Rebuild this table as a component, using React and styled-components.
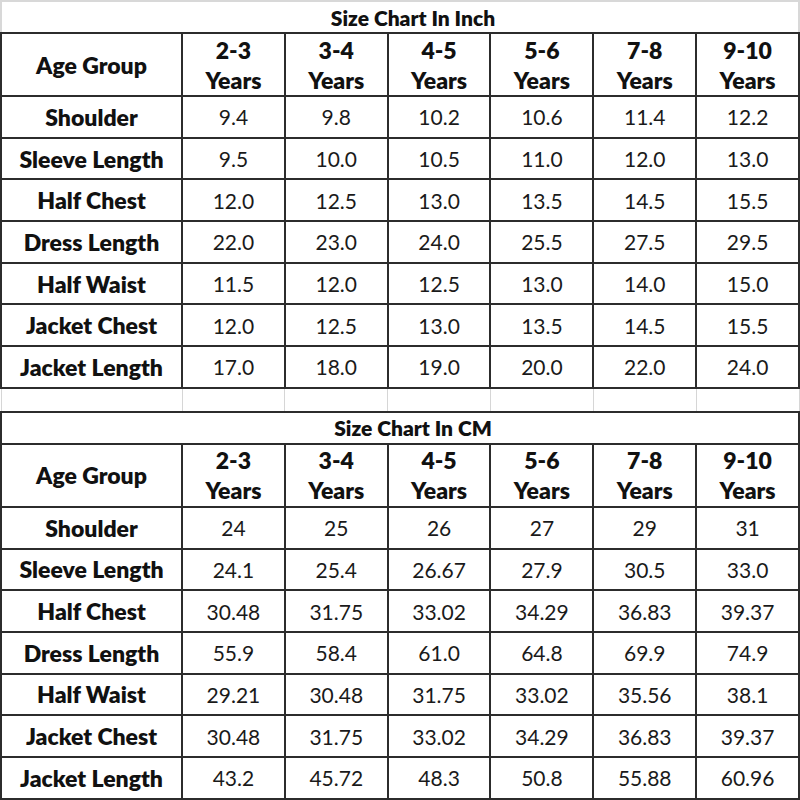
import React from 'react';
import styled, { createGlobalStyle } from 'styled-components';

const GlobalStyle = createGlobalStyle`
  html, body {
    margin: 0;
    padding: 0;
    background: #ffffff;
  }
  body {
    font-family: Lato, "Open Sans", "Liberation Sans", sans-serif;
    color: #111111;
  }
`;

const ages = ['2-3', '3-4', '4-5', '5-6', '7-8', '9-10'];

const inchRows = [
  ['Shoulder', '9.4', '9.8', '10.2', '10.6', '11.4', '12.2'],
  ['Sleeve Length', '9.5', '10.0', '10.5', '11.0', '12.0', '13.0'],
  ['Half Chest', '12.0', '12.5', '13.0', '13.5', '14.5', '15.5'],
  ['Dress Length', '22.0', '23.0', '24.0', '25.5', '27.5', '29.5'],
  ['Half Waist', '11.5', '12.0', '12.5', '13.0', '14.0', '15.0'],
  ['Jacket Chest', '12.0', '12.5', '13.0', '13.5', '14.5', '15.5'],
  ['Jacket Length', '17.0', '18.0', '19.0', '20.0', '22.0', '24.0'],
];

const cmRows = [
  ['Shoulder', '24', '25', '26', '27', '29', '31'],
  ['Sleeve Length', '24.1', '25.4', '26.67', '27.9', '30.5', '33.0'],
  ['Half Chest', '30.48', '31.75', '33.02', '34.29', '36.83', '39.37'],
  ['Dress Length', '55.9', '58.4', '61.0', '64.8', '69.9', '74.9'],
  ['Half Waist', '29.21', '30.48', '31.75', '33.02', '35.56', '38.1'],
  ['Jacket Chest', '30.48', '31.75', '33.02', '34.29', '36.83', '39.37'],
  ['Jacket Length', '43.2', '45.72', '48.3', '50.8', '55.88', '60.96'],
];

const Sheet = styled.table`
  width: 800px;
  border-collapse: collapse;
  table-layout: fixed;
`;

const TitleRow = styled.tr`
  height: 32px;
`;

// the merged title cell in the source sheet sits a little right of centre
const Title = styled.th`
  font-size: 21px;
  font-weight: 800;
  text-align: center;
  vertical-align: middle;
  padding: 0 0 0 26px;
  border: 2px solid ${p => (p.$soft ? '#d8d8d8' : '#2c2c2c')};
  border-bottom-color: #2c2c2c;
`;

const HeadRow = styled.tr`
  height: 63px;
`;

const HeadCell = styled.th`
  font-size: 23px;
  font-weight: 800;
  text-align: center;
  vertical-align: middle;
  line-height: 30px;
  padding: 0;
  border: 2px solid #2c2c2c;
`;

const Row = styled.tr`
  height: 41.7px;
`;

const Label = styled.td`
  font-size: 23px;
  font-weight: 800;
  text-align: center;
  vertical-align: middle;
  padding: 0;
  white-space: nowrap;
  border: 2px solid #2c2c2c;
`;

const Value = styled.td`
  font-size: 21px;
  font-weight: 400;
  text-align: center;
  vertical-align: middle;
  padding: 0;
  color: #1a1a1a;
  border: 2px solid #2c2c2c;
`;

const GapRow = styled.tr`
  height: 24px;
`;

const GapCell = styled.td`
  padding: 0;
  border: 1px solid #d6d6d6;
  border-top: 2px solid #2c2c2c;
  border-bottom: 2px solid #2c2c2c;
`;

function Chart({ title, rows, soft }) {
  return (
    <>
      <TitleRow>
        <Title colSpan={7} $soft={soft}>{title}</Title>
      </TitleRow>
      <HeadRow>
        <HeadCell>Age Group</HeadCell>
        {ages.map(a => (
          <HeadCell key={a}>
            {a}
            <br />
            Years
          </HeadCell>
        ))}
      </HeadRow>
      {rows.map(r => (
        <Row key={r[0]}>
          <Label>{r[0]}</Label>
          {r.slice(1).map((v, i) => (
            <Value key={i}>{v}</Value>
          ))}
        </Row>
      ))}
    </>
  );
}

export default function App() {
  return (
    <>
      <GlobalStyle />
      <Sheet>
        <colgroup>
          <col style={{ width: 181 }} />
          <col />
          <col />
          <col />
          <col />
          <col />
          <col />
        </colgroup>
        <tbody>
          <Chart title="Size Chart In Inch" rows={inchRows} soft />
          <GapRow>
            {Array.from({ length: 7 }).map((_, i) => (
              <GapCell key={i} />
            ))}
          </GapRow>
          <Chart title="Size Chart In CM" rows={cmRows} />
        </tbody>
      </Sheet>
    </>
  );
}
